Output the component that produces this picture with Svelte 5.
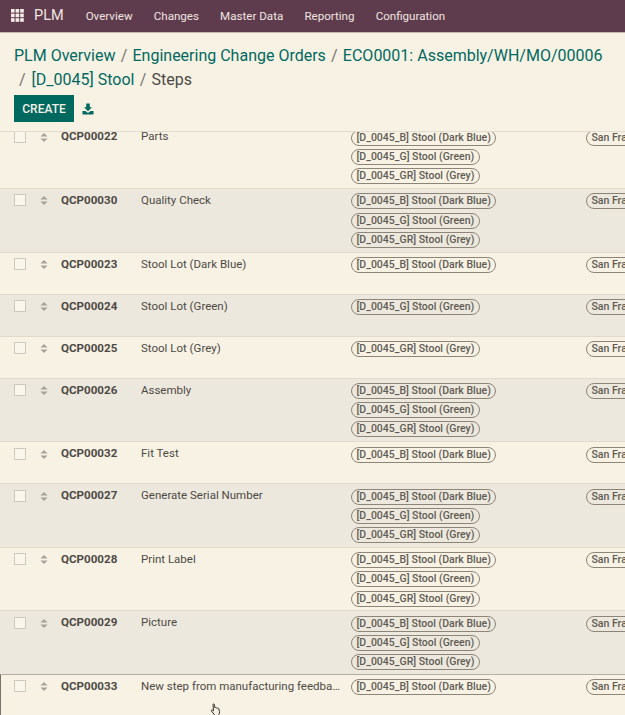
<script lang="ts">
  const menu = ['Overview', 'Changes', 'Master Data', 'Reporting', 'Configuration'];

  const B = '[D_0045_B] Stool (Dark Blue)';
  const G = '[D_0045_G] Stool (Green)';
  const GR = '[D_0045_GR] Stool (Grey)';
  const all = [B, G, GR];

  const steps = [
    { code: 'QCP00022', name: 'Parts', products: all },
    { code: 'QCP00030', name: 'Quality Check', products: all },
    { code: 'QCP00023', name: 'Stool Lot (Dark Blue)', products: [B] },
    { code: 'QCP00024', name: 'Stool Lot (Green)', products: [G] },
    { code: 'QCP00025', name: 'Stool Lot (Grey)', products: [GR] },
    { code: 'QCP00026', name: 'Assembly', products: all },
    { code: 'QCP00032', name: 'Fit Test', products: [B] },
    { code: 'QCP00027', name: 'Generate Serial Number', products: all },
    { code: 'QCP00028', name: 'Print Label', products: all },
    { code: 'QCP00029', name: 'Picture', products: all },
    { code: 'QCP00033', name: 'New step from manufacturing feedback', products: [B] }
  ];
</script>

<div class="page">
  <nav class="navbar">
    <svg class="apps" width="13" height="13" viewBox="0 0 13 13" fill="#f4ece6">
      {#each [0, 4.6, 9.2] as y}
        {#each [0, 4.6, 9.2] as x}
          <rect {x} {y} width="3.6" height="3.6"></rect>
        {/each}
      {/each}
    </svg>
    <span class="brand">PLM</span>
    {#each menu as item}
      <span class="menu-item">{item}</span>
    {/each}
  </nav>

  <header class="control">
    <div class="breadcrumb">
      <div><a href="#a">PLM Overview</a><span class="sep">/</span><a href="#b">Engineering Change Orders</a><span class="sep">/</span><a href="#c">ECO0001: Assembly/WH/MO/00006</a></div>
      <div><span class="sep first">/</span><a href="#d">[D_0045] Stool</a><span class="sep">/</span><span class="current">Steps</span></div>
    </div>
    <div class="buttons">
      <button class="create">CREATE</button>
      <svg class="download" width="12" height="12" viewBox="0 0 12 12" fill="#00695f">
        <path d="M4.2 0.5h3.6v3.7h2.2L6 8.2 2 4.2h2.2z"></path>
        <path d="M0.5 8h2.9L6 10 8.6 8h2.9v3.5h-11z"></path>
      </svg>
    </div>
  </header>

  <div class="list">
    {#each steps as step, i}
      <div class="row" class:even={i % 2 === 1} class:focused={i === steps.length - 1}>
        <span class="check"></span>
        <svg class="handle" width="8" height="9" viewBox="0 0 8 10" preserveAspectRatio="none" fill="#a8a39a">
          <path d="M4 0l3.6 4H.4zM4 10L.4 6h7.2z"></path>
        </svg>
        <span class="code">{step.code}</span>
        <span class="name">{step.name}</span>
        <div class="tags">
          {#each step.products as p}
            <span class="tag">{p}</span>
          {/each}
        </div>
        <span class="tag site">San Francisco</span>
      </div>
    {/each}
  </div>

  <svg class="cursor" width="12" height="14" viewBox="0 0 12 14" fill="#f8f2e4" stroke="#333" stroke-width="1">
    <path d="M3 1.2c.6-.6 1.4-.3 1.5.5l.3 3 .6-.2c.5-.1.8.1 1 .4.5-.3 1-.1 1.2.3.5-.2 1 0 1.2.5l.7 3c.2 1-.1 2-.8 3v1.300H4.500v-1.200L1.500 8c-.5-.700.200-1.500 1-1l1 .800z"></path>
  </svg>
</div>

<style>
  :global(body) {
    margin: 0;
    background: #f8f2e4;
  }

  .page {
    position: relative;
    display: flex;
    flex-direction: column;
    height: 715px;
    overflow: hidden;
    font-family: Roboto, "Liberation Sans", sans-serif;
    font-size: 11.5px;
    color: #4d4a46;
    background: #f8f2e4;
  }

  .navbar {
    display: flex;
    align-items: center;
    flex: none;
    height: 33px;
    padding: 0 0 1px 11px;
    background: #5f3c4d;
    border-bottom: 1px solid #c9b5ad;
    box-sizing: border-box;
    color: #efe5e0;
  }

  .apps {
    margin-right: 10px;
  }

  .brand {
    font-size: 14.5px;
    margin-right: 22px;
  }

  .menu-item {
    margin-right: 21.1px;
    font-size: 11.6px;
  }

  .control {
    position: relative;
    z-index: 1;
    flex: none;
    height: 99px;
    padding: 11px 14px 0;
    box-sizing: border-box;
    background: #f8f2e4;
    border-bottom: 1px solid #e2dbce;
  }

  .breadcrumb {
    font-size: 16px;
    line-height: 24px;
    white-space: nowrap;
    color: #4d4a46;
  }

  .breadcrumb a {
    color: #00695f;
    text-decoration: none;
  }

  .sep {
    color: #77726b;
    margin: 0 5.2px;
  }

  .sep.first {
    margin: 0 6px 0 5px;
  }

  .buttons {
    display: flex;
    align-items: center;
    gap: 8px;
    margin-top: 3px;
  }

  .create {
    width: 60px;
    height: 27px;
    border: none;
    padding: 0;
    background: #00695f;
    color: #f4f0e8;
    font: 500 12px Roboto, sans-serif;
  }

  .list {
    margin-top: -6.6px;
    flex: none;
  }

  .row {
    display: grid;
    grid-template-columns: 25.5px 21.5px 80px 210px 235px 80px;
    align-items: start;
    min-height: 42px;
    padding: 4px 0 3.7px 14px;
    box-sizing: border-box;
    border-bottom: 1px solid #e0d9cc;
    width: 720px;
  }

  .row.even {
    background: #ede8dd;
  }

  .row.focused {
    border-top: 1px solid #b5afa3;
    border-left: 1px solid #77726b;
    margin-top: -1px;
    padding-left: 13px;
  }

  .check {
    width: 12px;
    height: 12px;
    margin-top: 1.5px;
    box-sizing: border-box;
    border: 1px solid #cfc9bd;
    background: #faf6ec;
  }

  .handle {
    margin-top: 3.5px;
  }

  .code {
    font-size: 11.6px;
    font-weight: 700;
    line-height: 14px;
  }

  .name {
    line-height: 14px;
    overflow: hidden;
    white-space: nowrap;
    text-overflow: ellipsis;
    padding-right: 10px;
  }

  .tags {
    display: flex;
    flex-direction: column;
    align-items: flex-start;
    gap: 3.2px;
    margin-top: 0.5px;
  }

  .tag {
    display: inline-block;
    height: 16px;
    line-height: 14px;
    padding: 0 4.5px;
    box-sizing: border-box;
    border: 1px solid #8c8578;
    border-radius: 8px;
    white-space: nowrap;
    font-size: 10.5px;
    font-weight: 500;
    color: #5f5b54;
  }

  .site {
    justify-self: start;
    margin-top: 0.5px;
  }

  .cursor {
    position: absolute;
    left: 210px;
    top: 703px;
  }
</style>
